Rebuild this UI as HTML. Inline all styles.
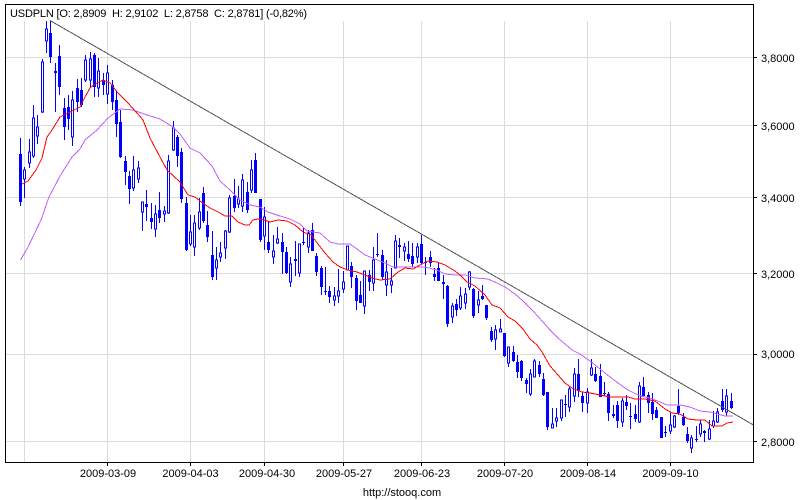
<!DOCTYPE html>
<html><head><meta charset="utf-8"><style>
html,body{margin:0;padding:0;background:#fff}
svg{display:block}
text{font-family:"Liberation Sans",Arial,sans-serif;font-size:11px;fill:#000}
</style></head><body>
<svg width="800" height="500" viewBox="0 0 800 500" xmlns="http://www.w3.org/2000/svg">
<rect width="800" height="500" fill="#fff"/>
<g shape-rendering="crispEdges">
<path fill="none" stroke="#dcdcdc" d="M24.5 21V462M107.5 21V462M190.5 21V462M264.5 21V462M343.5 21V462M421.5 21V462M504.5 21V462M587.5 21V462M670.5 21V462M6 57.5H753M6 125.5H753M6 197.5H753M6 273.5H753M6 354.5H753M6 441.5H753"/>
<path fill="none" stroke="#0000ff" d="M20.5 138V206M24.5 167V198M29.5 139V168M33.5 105V158M37.5 115V144M42.5 59V113M46.5 21V53M50.5 21V63M55.5 63V112M59.5 45V95M64.5 98V140M68.5 95V130M72.5 91V146M77.5 79V112M81.5 78V107M85.5 55V82M90.5 52V88M94.5 53V97M98.5 58V97M103.5 73V95M107.5 65V104M112.5 80V110M116.5 91V137M120.5 110V158M125.5 156V185M129.5 171V204M133.5 156V191M138.5 161V183M142.5 202V231M146.5 190V221M151.5 203V229M155.5 205V237M159.5 192V223M164.5 206V222M168.5 155V214M173.5 121V151M177.5 135V167M181.5 148V203M186.5 197V251M190.5 215V246M194.5 215V256M199.5 198V230M203.5 187V223M207.5 211V242M212.5 231V280M216.5 247V280M220.5 242V262M225.5 230V259M229.5 195V233M234.5 179V212M238.5 186V208M242.5 174V212M247.5 182V213M251.5 160V193M255.5 153V193M260.5 199V242M264.5 207V250M268.5 222V253M273.5 235V264M277.5 227V244M282.5 233V274M286.5 247V274M290.5 257V287M295.5 241V276M299.5 244V277M303.5 227V245M308.5 230V253M312.5 223V251M316.5 253V276M321.5 266V295M325.5 267V295M329.5 286V303M334.5 287V306M338.5 269V303M343.5 271V293M347.5 246V270M351.5 262V288M356.5 275V310M360.5 281V303M364.5 271V314M369.5 270V291M373.5 247V291M377.5 233V257M382.5 250V280M386.5 260V296M391.5 268V293M395.5 235V268M399.5 238V258M404.5 243V261M408.5 241V262M412.5 243V267M417.5 243V263M421.5 235V265M425.5 257V275M430.5 251V267M434.5 268V281M438.5 262V281M443.5 275V299M447.5 285V327M452.5 303V323M456.5 299V316M460.5 287V310M465.5 288V309M469.5 271V290M473.5 288V318M478.5 291V313M482.5 285V300M486.5 305V320M491.5 327V342M495.5 325V350M500.5 319V332M504.5 333V357M508.5 347V367M513.5 346V362M517.5 355V378M521.5 360V381M526.5 378V393M530.5 369V396M534.5 359V377M539.5 361V377M543.5 373V396M547.5 392V430M552.5 408V428M556.5 408V427M561.5 400V421M565.5 395V417M569.5 387V412M574.5 368V402M578.5 359V397M582.5 392V412M587.5 388V413M591.5 359V376M595.5 367V382M600.5 364V397M604.5 382V396M608.5 392V421M613.5 405V418M617.5 401V428M622.5 398V427M626.5 395V410M630.5 403V429M635.5 405V422M639.5 382V423M643.5 377V397M648.5 392V413M652.5 393V420M656.5 407V418M661.5 417V438M665.5 426V437M670.5 413V434M674.5 415V428M678.5 389V415M683.5 413V426M687.5 427V443M691.5 435V453M696.5 426V442M700.5 420V437M704.5 430V442M709.5 420V440M713.5 411V428M717.5 408V423M722.5 389V412M726.5 389V416M731.5 393V409"/>
<path fill="#0000ff" d="M19 154h3V202h-3zM49 33h3V57h-3zM54 71h3V73h-3zM58 56h3V87h-3zM63 108h3V127h-3zM67 107h3V119h-3zM76 88h3V102h-3zM80 90h3V105h-3zM93 55h3V87h-3zM102 80h3V85h-3zM111 85h3V102h-3zM115 100h3V124h-3zM119 122h3V157h-3zM124 161h3V172h-3zM128 176h3V189h-3zM145 204h3V207h-3zM150 218h3V222h-3zM158 210h3V218h-3zM176 137h3V156h-3zM180 152h3V199h-3zM185 203h3V250h-3zM202 193h3V221h-3zM206 225h3V237h-3zM211 255h3V277h-3zM233 196h3V208h-3zM246 192h3V210h-3zM254 160h3V193h-3zM259 199h3V240h-3zM267 242h3V250h-3zM281 242h3V252h-3zM285 252h3V273h-3zM294 259h3V261h-3zM302 242h3V243h-3zM311 230h3V251h-3zM315 256h3V272h-3zM320 268h3V287h-3zM324 291h3V292h-3zM328 291h3V297h-3zM350 266h3V277h-3zM355 278h3V301h-3zM359 295h3V303h-3zM368 275h3V282h-3zM376 254h3V255h-3zM381 255h3V277h-3zM398 245h3V247h-3zM407 254h3V259h-3zM411 256h3V264h-3zM420 244h3V263h-3zM424 262h3V263h-3zM429 257h3V263h-3zM433 274h3V277h-3zM437 268h3V281h-3zM442 282h3V284h-3zM446 286h3V324h-3zM455 304h3V310h-3zM472 289h3V316h-3zM481 296h3V299h-3zM485 305h3V318h-3zM490 331h3V340h-3zM503 333h3V356h-3zM512 352h3V361h-3zM516 362h3V372h-3zM520 361h3V378h-3zM525 380h3V384h-3zM538 365h3V374h-3zM542 379h3V395h-3zM546 392h3V427h-3zM564 404h3V405h-3zM577 374h3V391h-3zM581 396h3V403h-3zM594 374h3V381h-3zM599 376h3V397h-3zM603 393h3V394h-3zM607 394h3V413h-3zM612 414h3V416h-3zM616 405h3V421h-3zM625 402h3V406h-3zM629 416h3V417h-3zM634 414h3V419h-3zM642 387h3V396h-3zM647 395h3V403h-3zM651 402h3V414h-3zM655 410h3V418h-3zM660 417h3V438h-3zM664 432h3V433h-3zM677 406h3V413h-3zM682 417h3V425h-3zM686 434h3V441h-3zM695 439h3V440h-3zM703 431h3V433h-3zM721 401h3V410h-3zM730 401h3V408h-3z"/>
<path fill="#fff" stroke="#0000ff" d="M23.5 170h2V179h-2zM28.5 152h2V163h-2zM32.5 118h2V156h-2zM36.5 127h2V136h-2zM41.5 62h2V112h-2zM45.5 29h2V41h-2zM71.5 100h2V137h-2zM84.5 60h2V80h-2zM89.5 59h2V80h-2zM97.5 71h2V88h-2zM106.5 73h2V94h-2zM132.5 170h2V188h-2zM137.5 168h2V179h-2zM141.5 202h2V212h-2zM154.5 214h2V229h-2zM163.5 211h2V214h-2zM167.5 161h2V213h-2zM172.5 128h2V150h-2zM189.5 232h2V244h-2zM193.5 223h2V247h-2zM198.5 212h2V228h-2zM215.5 260h2V268h-2zM219.5 253h2V257h-2zM224.5 231h2V248h-2zM228.5 198h2V232h-2zM237.5 199h2V204h-2zM241.5 180h2V206h-2zM250.5 170h2V190h-2zM263.5 217h2V236h-2zM272.5 251h2V257h-2zM276.5 239h2V243h-2zM289.5 264h2V282h-2zM298.5 244h2V273h-2zM307.5 233h2V247h-2zM333.5 296h2V300h-2zM337.5 291h2V296h-2zM342.5 282h2V289h-2zM346.5 246h2V270h-2zM363.5 271h2V306h-2zM372.5 260h2V283h-2zM385.5 272h2V285h-2zM390.5 281h2V285h-2zM394.5 241h2V268h-2zM403.5 247h2V251h-2zM416.5 247h2V257h-2zM451.5 306h2V317h-2zM459.5 296h2V308h-2zM464.5 294h2V303h-2zM468.5 272h2V287h-2zM477.5 300h2V305h-2zM494.5 330h2V339h-2zM499.5 329h2V332h-2zM507.5 347h2V363h-2zM529.5 374h2V394h-2zM533.5 361h2V377h-2zM551.5 424h2V428h-2zM555.5 418h2V421h-2zM560.5 400h2V418h-2zM568.5 389h2V407h-2zM573.5 374h2V396h-2zM586.5 392h2V403h-2zM590.5 368h2V375h-2zM621.5 401h2V422h-2zM638.5 386h2V422h-2zM669.5 425h2V431h-2zM673.5 416h2V427h-2zM690.5 438h2V448h-2zM699.5 424h2V434h-2zM708.5 429h2V439h-2zM712.5 421h2V426h-2zM716.5 412h2V422h-2zM725.5 396h2V412h-2z"/>
<polyline fill="none" stroke="#c060ff" points="20.5,260 28,247 41,220 49,197 60,176 72,157 80,149 85,140 97,130 108,118 120,109 133,110 147,115 160,119 173,127 180,134 190,148 200,153 212,166 220,181 230,190 240,200 250,205 260,207 268,212 280,216 290,219 300,224 307,231 320,233 330,242 338,244 350,244 357,249 365,255 375,259 385,263 393,267 410,267 425,267 437,270 445,274 455,275 465,275 475,278 488,279 497,283 505,287 515,294 523,301 533,311 543,322 550,330 558,338 572,350 580,354 590,361 600,369 610,377 618,383 628,390 640,396 650,398 660,402 667,405 680,405 690,407 700,411 710,412 717,414 725,416 733,416"/>
<polyline fill="none" stroke="#ff0000" points="22,184 28,181 36,170 42,158 47,137 52,130 60,117 72,111 80,107 85,97 90,88 95,84 103,80 110,83 118,93 128,103 137,113 143,120 150,138 160,157 167,170 180,182 188,195 195,197 200,201 210,208 220,213 225,216 232,216 238,222 245,225 249,225 253,220 258,219 264,220 270,222 278,220 287,221 295,225 303,232 311,235 318,244 325,253 333,262 340,267 348,270 357,272 365,275 372,278 380,280 390,279 398,272 405,268 413,269 420,265 428,261 437,262 445,265 455,271 460,275 467,282 475,286 485,295 492,305 500,308 508,317 515,321 523,329 530,339 537,345 542,352 550,366 558,375 565,383 572,388 582,392 590,393 600,395 610,397 620,397 628,397 635,399 645,399 655,401 665,409 672,413 680,414 688,419 697,420 705,420 712,426 722,426 727,423 733,422"/>
<path fill="none" stroke="#555" d="M50 20.5L753.5 425"/>
<path fill="none" stroke="#000" d="M5.5 4.5H753.5V462.5H5.5ZM753 57.5H757M753 125.5H757M753 197.5H757M753 273.5H757M753 354.5H757M753 441.5H757M107.5 462V466M190.5 462V466M264.5 462V466M343.5 462V466M421.5 462V466M504.5 462V466M587.5 462V466M670.5 462V466"/>
</g>
<text x="10" y="17" xml:space="preserve" textLength="297">USDPLN [O: 2,8909  H: 2,9102  L: 2,8758  C: 2,8781] (-0,82%)</text>
<text x="761" y="62">3,8000</text>
<text x="761" y="130">3,6000</text>
<text x="761" y="202">3,4000</text>
<text x="761" y="278">3,2000</text>
<text x="761" y="358">3,0000</text>
<text x="761" y="446">2,8000</text>
<g text-anchor="middle">
<text x="108" y="477">2009-03-09</text>
<text x="190.5" y="477">2009-04-03</text>
<text x="267" y="477">2009-04-30</text>
<text x="344" y="477">2009-05-27</text>
<text x="422" y="477">2009-06-23</text>
<text x="505" y="477">2009-07-20</text>
<text x="588" y="477">2009-08-14</text>
<text x="670.5" y="477">2009-09-10</text>
<text x="402" y="496">http://stooq.com</text>
</g>
</svg>
</body></html>
